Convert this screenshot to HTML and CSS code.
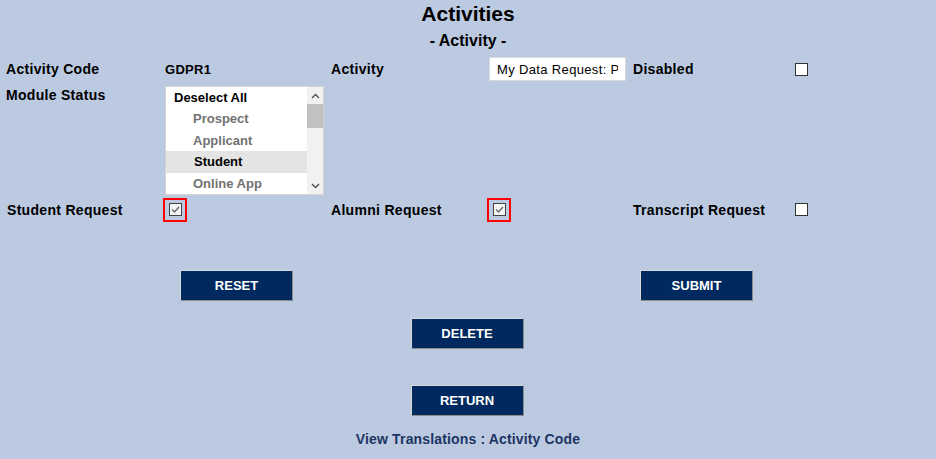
FILE: index.html
```html
<!DOCTYPE html>
<html lang="en">
<head>
    <meta charset="UTF-8">
    <meta name="viewport" content="width=device-width, initial-scale=1.0">
    <title>Activities</title>
    <link rel="stylesheet" href="styles.css">
</head>
<body>
    <h1 class="page-title">Activities</h1>
    <h2 class="page-subtitle">- Activity -</h2>

    <form class="activity-form">
        <div class="form-row row-first">
            <span class="label">Activity Code</span>
            <span class="value">GDPR1</span>
            <span class="label">Activity</span>
            <input class="text-input" type="text" value="My Data Request: P">
            <span class="label">Disabled</span>
            <span class="check"></span>
        </div>

        <div class="form-row row-status">
            <span class="label">Module Status</span>
            <div class="listbox">
                <ul class="options">
                    <li class="option">Deselect All</li>
                    <li class="option child">Prospect</li>
                    <li class="option child">Applicant</li>
                    <li class="option child selected">Student</li>
                    <li class="option child">Online App</li>
                </ul>
                <div class="scrollbar">
                    <span class="arrow">
                        <svg width="9" height="6" viewBox="0 0 9 6"><polyline points="1,5 4.5,1.5 8,5" fill="none" stroke="#505050" stroke-width="1.4"/></svg>
                    </span>
                    <span class="thumb"></span>
                    <span class="track"></span>
                    <span class="arrow">
                        <svg width="9" height="6" viewBox="0 0 9 6"><polyline points="1,1 4.5,4.5 8,1" fill="none" stroke="#505050" stroke-width="1.4"/></svg>
                    </span>
                </div>
            </div>
        </div>

        <div class="form-row row-requests">
            <span class="label">Student Request</span>
            <span class="highlight">
                <span class="check checked">
                    <svg width="11" height="11" viewBox="0 0 11 11"><polyline points="2,5.5 4.5,8 9,3" fill="none" stroke="#666" stroke-width="1.3"/></svg>
                </span>
            </span>
            <span class="label">Alumni Request</span>
            <span class="highlight">
                <span class="check checked">
                    <svg width="11" height="11" viewBox="0 0 11 11"><polyline points="2,5.5 4.5,8 9,3" fill="none" stroke="#666" stroke-width="1.3"/></svg>
                </span>
            </span>
            <span class="label">Transcript Request</span>
            <span class="check"></span>
        </div>

        <div class="button-row">
            <button type="button" class="btn">RESET</button>
            <button type="button" class="btn">SUBMIT</button>
        </div>
        <div class="button-row single delete-row">
            <button type="button" class="btn">DELETE</button>
        </div>
        <div class="button-row single return-row">
            <button type="button" class="btn">RETURN</button>
        </div>
    </form>

    <p class="translations"><a href="#">View Translations : Activity Code</a></p>
</body>
</html>
```

FILE: styles.css
```css
body {
    font-family: "Liberation Sans", Arial, sans-serif;
    margin: 0;
    padding: 0;
    background-color: #bccae1;
    color: #000;
}

.page-title {
    margin: 0;
    font-size: 21px;
    line-height: 28px;
    text-align: center;
}

.page-subtitle {
    margin: 0;
    font-size: 16px;
    line-height: 26px;
    text-align: center;
}

.form-row {
    display: grid;
    grid-template-columns: 159px 166px 158px 144px 162px auto;
    padding-left: 6px;
    align-items: center;
}

.row-first {
    margin-top: 3px;
    height: 24px;
}

.row-status {
    margin-top: 5px;
    align-items: start;
}

.row-status .label {
    line-height: 18px;
}

.row-requests {
    margin-top: 2px;
    height: 25px;
}

.row-requests .label:first-child {
    padding-left: 1px;
}

.label {
    font-size: 14px;
    font-weight: bold;
    letter-spacing: 0.3px;
    white-space: nowrap;
}

.value {
    font-size: 13px;
    font-weight: bold;
    letter-spacing: 0.3px;
}

.text-input {
    box-sizing: border-box;
    width: 137px;
    height: 24px;
    padding: 0 7px;
    border: 1px solid #d9d9d9;
    background: #fff;
    font-family: "Liberation Sans", Arial, sans-serif;
    font-size: 13px;
    letter-spacing: 0.35px;
    color: #000;
    outline: none;
}

.check {
    display: flex;
    align-items: center;
    justify-content: center;
    box-sizing: border-box;
    width: 13px;
    height: 13px;
    border: 1px solid #333;
    background: #fff;
}

.check.checked {
    border-color: #444;
    background: #f4f4f4;
}

.highlight {
    display: flex;
    align-items: center;
    justify-content: center;
    box-sizing: border-box;
    width: 24px;
    height: 24px;
    margin-left: -2px;
    border: 2px solid #f00;
}

.listbox {
    display: flex;
    box-sizing: border-box;
    width: 159px;
    height: 109px;
    border: 1px solid #d4d4d4;
    background: #fff;
}

.options {
    flex: 1;
    margin: 0;
    padding: 0;
    list-style: none;
}

.option {
    height: 21.4px;
    line-height: 21.4px;
    padding-left: 8px;
    font-size: 13px;
    font-weight: bold;
    white-space: nowrap;
}

.option.child {
    padding-left: 27px;
    color: #727272;
}

.option.selected {
    background: #e4e4e4;
    color: #000;
    padding-left: 28px;
}

.scrollbar {
    display: flex;
    flex-direction: column;
    width: 16px;
    background: #f1f1f1;
}

.arrow {
    display: flex;
    align-items: center;
    justify-content: center;
    height: 17px;
}

.thumb {
    height: 24px;
    background: #c1c1c1;
}

.track {
    flex: 1;
}

.button-row {
    display: flex;
    justify-content: center;
    gap: 347px;
    margin-top: 48px;
    padding-right: 3px;
}

.button-row.single {
    padding-right: 2px;
}

.delete-row {
    margin-top: 17px;
}

.return-row {
    margin-top: 36px;
}

.btn {
    box-sizing: border-box;
    width: 113px;
    height: 31px;
    padding: 0;
    border: 1px solid;
    border-color: #d8d8d8 #8c8c8c #8c8c8c #d8d8d8;
    background-color: #002a5f;
    color: #fff;
    font-family: "Liberation Sans", Arial, sans-serif;
    font-size: 13px;
    font-weight: bold;
    cursor: pointer;
}

.translations {
    margin: 15px 0 0;
    text-align: center;
    font-size: 14px;
    line-height: 16px;
    font-weight: bold;
    letter-spacing: 0.15px;
}

.translations a {
    color: #1c3464;
    text-decoration: none;
}
```
